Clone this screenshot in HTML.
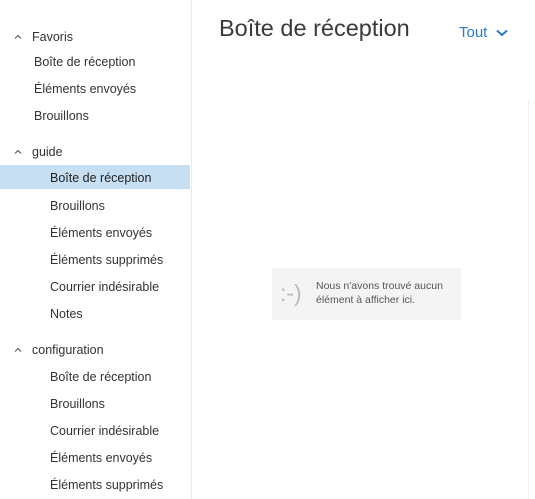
<!DOCTYPE html>
<html><head><meta charset="utf-8"><style>
body{margin:0;width:535px;height:499px;overflow:hidden;background:#fff;font-family:"Liberation Sans",sans-serif;color:#333;position:relative}
.side{position:absolute;left:0;top:0;width:191px;height:499px;border-right:1px solid #eaeaea}
.it{position:absolute;font-size:12.5px;line-height:24px;height:24px;white-space:nowrap}
.h{left:14px}
.h svg{margin-right:10px;vertical-align:middle;position:relative;top:-1px}
.l1{left:34px}.l2{left:50px}
.sel{left:0;width:190px;background:#c7dff3;padding-left:50px;box-sizing:border-box;color:#222}
.title{position:absolute;left:219px;top:15px;font-size:23.5px;color:#3a3a3a}
.tout{position:absolute;left:459px;top:24px;font-size:15px;color:#2a7ad2}
.vline{position:absolute;left:528px;top:100px;width:1px;height:399px;background:#eee}
.empty{position:absolute;left:272px;top:268px;width:189px;height:52px;background:#f4f4f4}
.smile{position:absolute;left:8px;top:12px;font-size:23px;color:#bbb}
.msg{position:absolute;left:44px;top:11px;font-size:10.5px;line-height:14px;color:#555}
</style></head><body>
<div class="side">
<div class="it h" style="top:25px"><svg width="8" height="5" viewBox="0 0 8 5"><path d="M1 4.5 L4 1.5 L7 4.5" stroke="#555" stroke-width="1.1" fill="none"/></svg>Favoris</div>
<div class="it l1" style="top:50px">Boîte de réception</div>
<div class="it l1" style="top:77px">Éléments envoyés</div>
<div class="it l1" style="top:104px">Brouillons</div>
<div class="it h" style="top:140px"><svg width="8" height="5" viewBox="0 0 8 5"><path d="M1 4.5 L4 1.5 L7 4.5" stroke="#555" stroke-width="1.1" fill="none"/></svg>guide</div>
<div class="it sel" style="top:165px;line-height:26px">Boîte de réception</div>
<div class="it l2" style="top:194px">Brouillons</div>
<div class="it l2" style="top:221px">Éléments envoyés</div>
<div class="it l2" style="top:248px">Éléments supprimés</div>
<div class="it l2" style="top:275px">Courrier indésirable</div>
<div class="it l2" style="top:302px">Notes</div>
<div class="it h" style="top:338px"><svg width="8" height="5" viewBox="0 0 8 5"><path d="M1 4.5 L4 1.5 L7 4.5" stroke="#555" stroke-width="1.1" fill="none"/></svg>configuration</div>
<div class="it l2" style="top:365px">Boîte de réception</div>
<div class="it l2" style="top:392px">Brouillons</div>
<div class="it l2" style="top:419px">Courrier indésirable</div>
<div class="it l2" style="top:446px">Éléments envoyés</div>
<div class="it l2" style="top:473px">Éléments supprimés</div>
</div>
<div class="title">Boîte de réception</div>
<div class="tout">Tout <svg width="12" height="8" viewBox="0 0 12 8" style="margin-left:4px"><path d="M1 1.5 L6 6 L11 1.5" stroke="#2a7ad2" stroke-width="2" fill="none"/></svg></div>
<div class="vline"></div>
<div class="empty"><div class="smile">:-)</div><div class="msg">Nous n'avons trouvé aucun<br>élément à afficher ici.</div></div>
</body></html>
